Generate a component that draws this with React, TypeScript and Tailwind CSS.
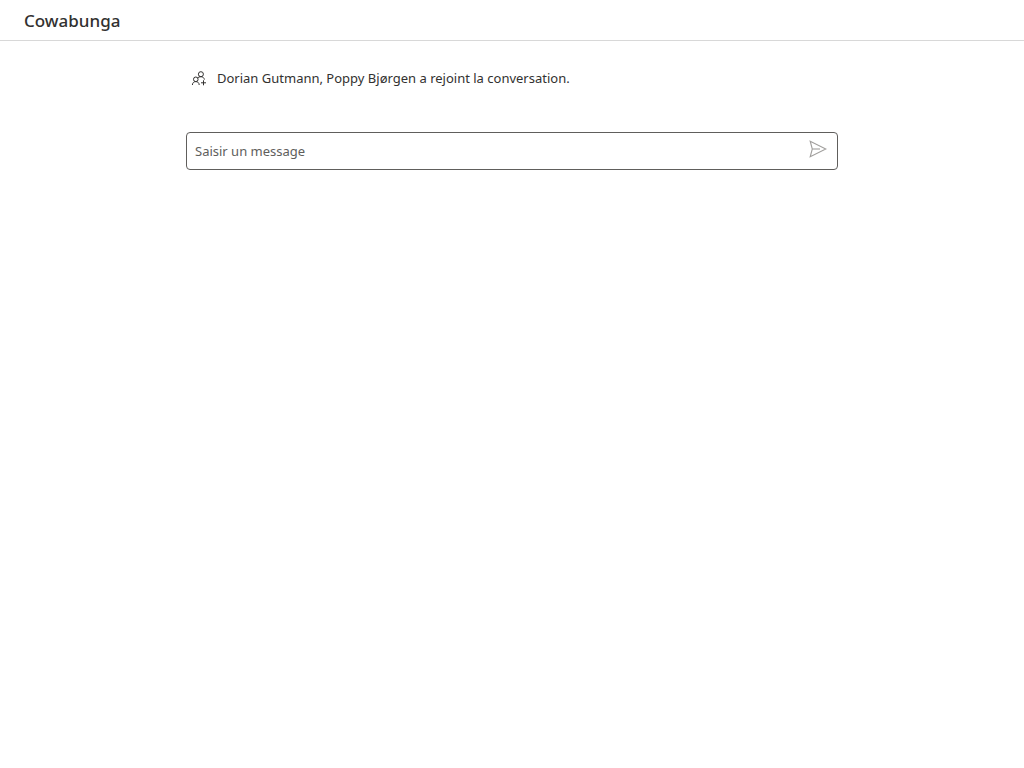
import { useState } from "react";

function PeopleAddIcon() {
  return (
    <svg viewBox="0 0 16 16" className="size-4 shrink-0" fill="none" stroke="currentColor" strokeWidth="1" aria-hidden="true">
      <circle cx="9.9" cy="4.2" r="2.5" />
      <circle cx="4.8" cy="9.3" r="2.3" />
      <path d="M1.4 15C1.4 12.9 2.8 11.6 4.8 11.6S8.2 12.9 8.2 15" />
      <path d="M6.5 8C7.3 7.1 8.4 6.7 9.9 6.7C11.8 6.7 13.1 7.8 13.4 9.6" />
      <path d="M12.5 10.3V15.3M10 12.8H15" />
    </svg>
  );
}

function SendIcon() {
  return (
    <svg viewBox="0 0 18 18" className="size-[18px]" fill="none" stroke="currentColor" strokeWidth="1.1" aria-hidden="true">
      <path d="M1.2 1.2L16.8 9L1.2 16.8L3.3 9Z" />
      <path d="M3.3 9H11" />
    </svg>
  );
}

export default function App() {
  const [message, setMessage] = useState("");

  return (
    <div className="min-h-screen bg-white font-['Noto_Sans',sans-serif] text-[#323130]">
      <header className="border-b border-[#d8d8d8] px-6 pt-[9px] pb-[7px]">
        <h1 className="text-[17px] leading-6 font-medium">Cowabunga</h1>
      </header>
      <main className="mx-auto w-full max-w-[652px] pt-[27px]">
        <div className="flex items-center gap-[10px] pl-[5px]">
          <PeopleAddIcon />
          <p className="text-[13px] leading-5">Dorian Gutmann, Poppy Bjørgen a rejoint la conversation.</p>
        </div>
        <form
          className="mt-11 flex h-[38px] items-center rounded-[4px] border border-[#605e5c] px-2"
          onSubmit={(event) => event.preventDefault()}
        >
          <input
            type="text"
            aria-label="Saisir un message"
            placeholder="Saisir un message"
            value={message}
            onChange={(event) => setMessage(event.target.value)}
            className="min-w-0 flex-1 bg-transparent text-[13px] leading-5 outline-none placeholder:text-[#605e5c]"
          />
          <button type="submit" aria-label="Envoyer" className="mb-1 flex size-[22px] items-center justify-center text-[#a19f9d]">
            <SendIcon />
          </button>
        </form>
      </main>
    </div>
  );
}
